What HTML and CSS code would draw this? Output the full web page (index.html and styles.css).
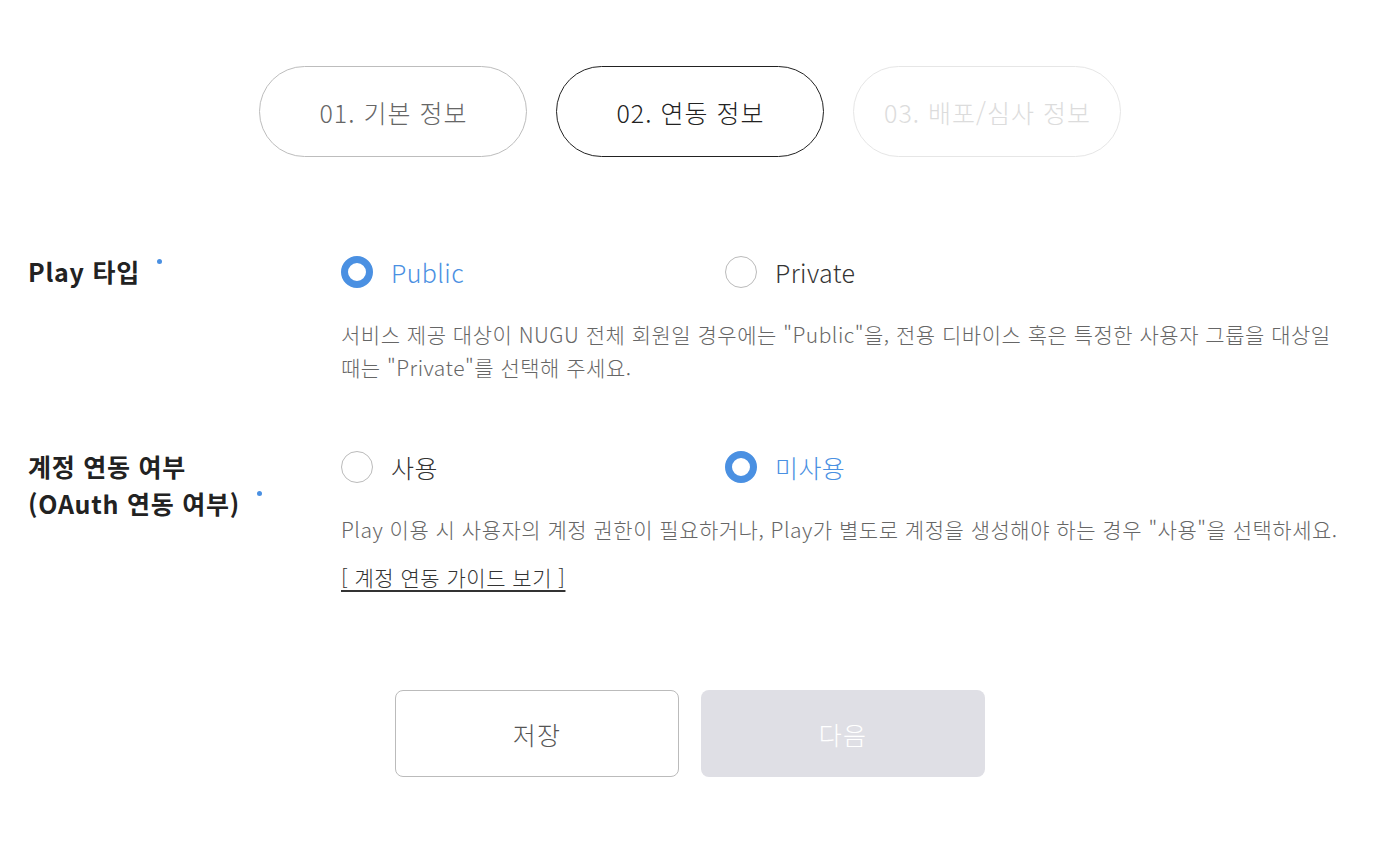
FILE: index.html
```html
<!DOCTYPE html>
<html lang="ko">
<head>
<meta charset="utf-8">
<title>연동 정보</title>
<link rel="stylesheet" href="styles.css">
</head>
<body>
<div class="page">
  <nav class="tabs">
    <div class="tab tab-done">01. 기본 정보</div>
    <div class="tab tab-active">02. 연동 정보</div>
    <div class="tab tab-todo">03. 배포/심사 정보</div>
  </nav>

  <section class="form">
    <div class="row row-play">
      <div class="label">Play 타입<span class="req"></span></div>
      <div class="field">
        <div class="options">
          <label class="option checked"><span class="radio"></span><span class="opt-text">Public</span></label>
          <label class="option"><span class="radio"></span><span class="opt-text">Private</span></label>
        </div>
        <p class="desc">서비스 제공 대상이 NUGU 전체 회원일 경우에는 "Public"을, 전용 디바이스 혹은 특정한 사용자 그룹을 대상일<br>때는 "Private"를 선택해 주세요.</p>
      </div>
    </div>

    <div class="row row-oauth">
      <div class="label">계정 연동 여부<br>(OAuth 연동 여부)<span class="req"></span></div>
      <div class="field">
        <div class="options">
          <label class="option"><span class="radio"></span><span class="opt-text">사용</span></label>
          <label class="option checked"><span class="radio"></span><span class="opt-text">미사용</span></label>
        </div>
        <p class="desc">Play 이용 시 사용자의 계정 권한이 필요하거나, Play가 별도로 계정을 생성해야 하는 경우 "사용"을 선택하세요.</p>
        <a class="guide" href="#">[ 계정 연동 가이드 보기 ]</a>
      </div>
    </div>
  </section>

  <div class="actions">
    <button class="btn btn-save">저장</button>
    <button class="btn btn-next" disabled>다음</button>
  </div>
</div>
</body>
</html>
```

FILE: styles.css
```css
* { box-sizing: border-box; }
html, body { margin: 0; padding: 0; background: #fff; }
body {
  font-family: "Noto Sans CJK KR", "Noto Sans", sans-serif;
  color: #222;
}
.page { width: 1382px; }

.tabs {
  display: flex;
  justify-content: center;
  gap: 29px;
  padding-top: 66px;
  padding-right: 2px;
}
.tab {
  width: 268px;
  height: 91px;
  border: 1px solid #bbb;
  border-radius: 46px;
  display: flex;
  align-items: center;
  justify-content: center;
  font-size: 25px;
  font-weight: 300;
  letter-spacing: 1px;
  padding-left: 1px;
}
.tab-done { color: #666; border-color: #bdbdbd; }
.tab-active { color: #222; border-color: #222; }
.tab-todo { color: #dcdcdc; border-color: #e6e6e6; }

.form {
  margin-top: 97px;
  padding-left: 28px;
}
.row {
  display: grid;
  grid-template-columns: 313px 1fr;
}
.row-oauth { margin-top: 65px; }

.label {
  font-size: 25px;
  font-weight: 700;
  line-height: 37px;
  letter-spacing: 0.75px;
  color: #222;
  margin-top: -1px;
}
.req {
  display: inline-block;
  width: 5px;
  height: 5px;
  border-radius: 50%;
  background: #4a90e2;
  margin-left: 17px;
  vertical-align: 18px;
}

.options { display: flex; height: 36px; }
.option {
  width: 384px;
  display: flex;
  align-items: center;
  gap: 18px;
  font-size: 25px;
  font-weight: 300;
  letter-spacing: 0.4px;
  color: #333;
  cursor: pointer;
}
.radio {
  width: 32px;
  height: 32px;
  border-radius: 50%;
  border: 1.5px solid #bbb;
  background: #fff;
  flex: none;
}
.option.checked { color: #4a90e2; }
.option.checked .radio { border: 7px solid #4a90e2; }
.opt-text { line-height: 36px; }

.desc {
  margin: 28px 0 0;
  font-size: 21px;
  font-weight: 300;
  line-height: 33px;
  color: #666;
  letter-spacing: 0.5px;
}
.guide {
  display: inline-block;
  margin-top: 15px;
  font-size: 21px;
  font-weight: 300;
  line-height: 33px;
  letter-spacing: 0.5px;
  color: #333;
  text-decoration: underline;
  text-underline-offset: 4px;
}

.actions {
  display: flex;
  justify-content: center;
  gap: 22px;
  margin-top: 96px;
  padding-right: 2px;
}
.btn {
  width: 284px;
  height: 87px;
  border-radius: 8px;
  font-family: inherit;
  font-size: 25px;
  font-weight: 300;
  letter-spacing: 1.2px;
}
.btn-save { background: #fff; border: 1px solid #bbb; color: #555; }
.btn-next { background: #dfdfe5; border: none; color: #fff; }
```
